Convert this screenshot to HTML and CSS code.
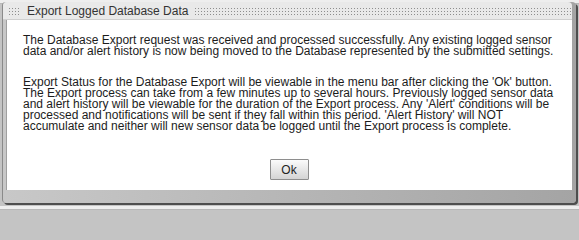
FILE: index.html
```html
<!DOCTYPE html>
<html>
<head>
<meta charset="utf-8">
<title>Export Logged Database Data</title>
<link rel="stylesheet" href="styles.css">
</head>
<body>
<div class="dialog">
  <div class="titlebar">
    <span class="grip grip-left"></span>
    <span class="title">Export Logged Database Data</span>
    <span class="grip grip-right"></span>
  </div>
  <div class="content">
    <p class="para">The Database Export request was received and processed successfully. Any existing logged sensor data and/or alert history is now being moved to the Database represented by the submitted settings.</p>
    <p class="para para-gap">Export Status for the Database Export will be viewable in the menu bar after clicking the 'Ok' button. The Export process can take from a few minutes up to several hours. Previously logged sensor data and alert history will be viewable for the duration of the Export process. Any 'Alert' conditions will be processed and notifications will be sent if they fall within this period. 'Alert History' will NOT accumulate and neither will new sensor data be logged until the Export process is complete.</p>
    <div class="actions">
      <button class="btn" type="button">Ok</button>
    </div>
  </div>
</div>
</body>
</html>
```

FILE: styles.css
```css
html, body {
  margin: 0;
  padding: 0;
}
body {
  width: 579px;
  height: 206px;
  overflow: hidden;
  background: linear-gradient(to bottom, #eeeeee 0, #eeeeee 3px, #b8b8b8 3px, #b8b8b8 4px, #c4c4c4 4px);
  padding: 2px 0 0 2px;
  box-sizing: border-box;
  font-family: "Liberation Sans", Arial, sans-serif;
}
.dialog {
  width: 574px;
  height: 201px;
  box-sizing: border-box;
  border-radius: 4px;
  background: linear-gradient(to right, #c8c8c8, #a4a4a4);
  box-shadow: 2px 2px 0 #4e4e4e;
  display: flex;
  flex-direction: column;
  padding: 0 4px 13px 3px;
  border-left: 1px solid #8a8a8a;
}
.titlebar {
  height: 17px;
  margin-left: -3px;
  background: #e9e9e9;
  border-radius: 4px 4px 0 0;
  display: flex;
  align-items: center;
  padding-left: 4px;
  border-bottom: 1px solid #cfcfcf;
}
.grip {
  height: 10px;
  background-image:
    linear-gradient(to right, #e9e9e9 2px, transparent 2px),
    linear-gradient(to bottom, #e9e9e9 2px, #8e8e8e 2px);
  background-size: 3px 3px;
  background-position: 0 0;
}
.grip-left {
  width: 14px;
  margin-right: 6px;
}
.grip-right {
  flex: 1;
  margin-left: 5px;
  margin-right: 0;
}
.title {
  font-size: 12px;
  color: #333333;
  line-height: 14px;
  white-space: nowrap;
}
.content {
  flex: 1;
  background: #ffffff;
  border-left: 1px solid #a0a0a0;
  padding: 15px 17px 0 16px;
  display: flex;
  flex-direction: column;
}
.para {
  margin: 0;
  font-size: 12px;
  line-height: 11px;
  color: #1c1c1c;
}
.para-gap {
  margin-top: 20px;
}
.actions {
  display: flex;
  justify-content: center;
  margin-top: 27px;
}
.btn {
  width: 39px;
  height: 21px;
  padding: 0;
  font-family: "Liberation Sans", Arial, sans-serif;
  font-size: 12px;
  color: #222222;
  border: 1px solid #8e8e8e;
  border-radius: 1px;
  background: linear-gradient(to bottom, #fbfbfb, #d4d4d4);
}
```
